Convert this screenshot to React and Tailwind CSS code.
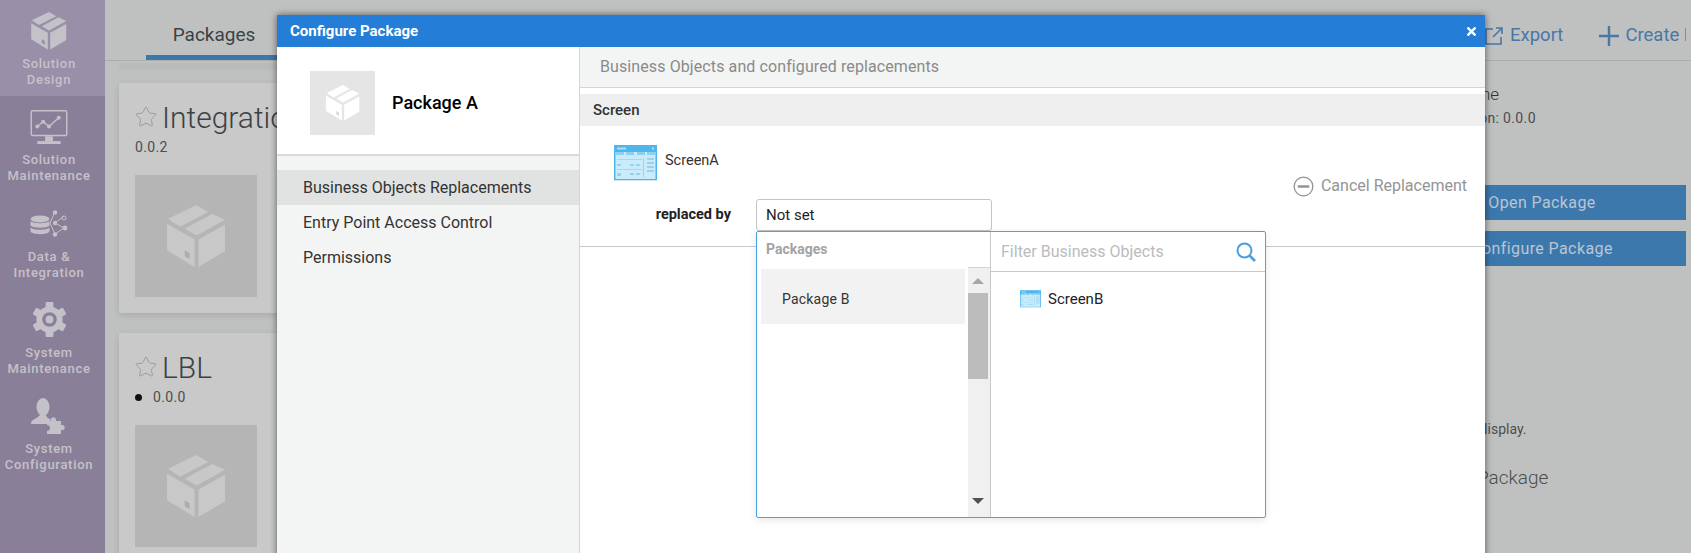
import React from 'react';
import { Star } from 'lucide-react';

const BoxIcon = ({ className, fill, mark }) => (
  <svg viewBox="0 0 60 64" className={className}>
    <polygon points="1,14 30,0 42,7 13,22" fill={fill} />
    <polygon points="18,24 46,9 59,15 30,31" fill={fill} />
    <polygon points="0,19 28,35 28,63 0,46" fill={fill} />
    <polygon points="32,35 59,20 59,47 32,63" fill={fill} />
    <polygon points="18,46 23,49 23,55 18,52" fill={mark} />
  </svg>
);

const MonitorIcon = () => (
  <svg viewBox="0 0 38 36" className="w-[38px] h-[35px]">
    <rect x="0.75" y="0.75" width="36.5" height="25.5" rx="1.5" fill="none" stroke="#c4c2c8" strokeWidth="1.5" />
    <polyline points="7,17 13,12 19,17 29,8" fill="none" stroke="#c4c2c8" strokeWidth="1.5" />
    <circle cx="7" cy="17" r="2" fill="#c4c2c8" />
    <circle cx="13" cy="12" r="2" fill="#c4c2c8" />
    <circle cx="19" cy="17" r="2" fill="#c4c2c8" />
    <circle cx="29" cy="8" r="2" fill="#c4c2c8" />
    <rect x="15" y="27" width="8" height="5" fill="#c4c2c8" />
    <rect x="7" y="32" width="24" height="3" fill="#c4c2c8" />
  </svg>
);

const DataIcon = () => (
  <svg viewBox="0 0 38 27" className="w-[38px] h-[27px]">
    <ellipse cx="10" cy="9" rx="9.5" ry="3.5" fill="#c4c2c8" />
    <path d="M0.5 11c2 3 17 3 19 0v4.5c-2 3-17 3-19 0z" fill="#c4c2c8" />
    <path d="M0.5 17.5c2 3 17 3 19 0v4c-2 3.5-17 3.5-19 0z" fill="#c4c2c8" />
    <path d="M25 2L20 13L25 24L34 18L25 13L34 6" fill="none" stroke="#c4c2c8" strokeWidth="1" />
    <circle cx="25" cy="2.5" r="2.2" fill="#c4c2c8" />
    <circle cx="34" cy="8" r="2" fill="none" stroke="#c4c2c8" />
    <circle cx="25" cy="13" r="2.2" fill="#c4c2c8" />
    <circle cx="35" cy="18" r="2.4" fill="#c4c2c8" />
    <circle cx="25" cy="24.5" r="2.2" fill="#c4c2c8" />
  </svg>
);

const GearIcon = () => (
  <svg viewBox="0 0 34 36" className="w-[33px] h-[35px]">
    {[0, 60, 120, 180, 240, 300].map((a) => (
      <rect key={a} x="13" y="0" width="8" height="8" rx="1" fill="#c4c2c8" transform={`rotate(${a} 17 18)`} />
    ))}
    <circle cx="17" cy="18" r="10.5" fill="none" stroke="#c4c2c8" strokeWidth="6" />
    <circle cx="17" cy="18" r="4" fill="#c4c2c8" />
  </svg>
);

const UserPuzzleIcon = () => (
  <svg viewBox="0 0 36 37" className="w-[36px] h-[37px]">
    <ellipse cx="12" cy="9" rx="6.5" ry="9" fill="#c4c2c8" />
    <path d="M0 26C0 21 6 21 9 17L15 17C16 20 18 21 20 21L17 26Z" fill="#c4c2c8" />
    <path d="M16 23H20C19 18 26 18 25 23H30V27C35 26 35 33 30 32V36H16V33C20 33 20 27 16 27Z" fill="#c4c2c8" />
  </svg>
);

const ScreenIcon = ({ className }) => (
  <svg viewBox="0 0 43 36" className={className}>
    <rect width="43" height="35" fill="#4fb6ec" />
    <rect y="35" width="43" height="1" fill="#cfe6f3" />
    <rect x="1.5" y="7" width="40" height="27" fill="#c9ecfd" />
    <rect x="3" y="2.5" width="9" height="2" fill="#a9dcf5" />
    <rect x="38" y="2.5" width="2" height="2" fill="#a9dcf5" />
    <rect x="2" y="7" width="8" height="3" fill="#8fcff0" />
    <rect x="12" y="7" width="8" height="3" fill="#8fcff0" />
    <rect x="23" y="7" width="8" height="3" fill="#8fcff0" />
    <rect x="33" y="7" width="8" height="3" fill="#8fcff0" />
    <rect x="3" y="14" width="25" height="1" fill="#a6d8f0" />
    <rect x="3" y="19" width="4" height="2" fill="#9ad2ee" />
    <rect x="16" y="19" width="4" height="2" fill="#9ad2ee" />
    <rect x="22" y="19" width="4" height="2" fill="#9ad2ee" />
    <rect x="3" y="24" width="25" height="1" fill="#a6d8f0" />
    <rect x="3" y="28" width="4" height="3" fill="#9ad2ee" />
    <rect x="16" y="28" width="4" height="2" fill="#9ad2ee" />
    <rect x="22" y="28" width="4" height="2" fill="#9ad2ee" />
    <rect x="29" y="13" width="1" height="19" fill="#9ad2ee" />
    <rect x="33" y="13" width="7" height="2" fill="#9ad2ee" />
    <rect x="33" y="17" width="7" height="2" fill="#9ad2ee" />
    <rect x="33" y="21" width="7" height="2" fill="#9ad2ee" />
    <rect x="33" y="25" width="7" height="2" fill="#9ad2ee" />
  </svg>
);

const navItems = [
  { lines: ['Solution', 'Design'], icon: <BoxIcon className="w-[36px] h-[38px]" fill="#c4c2c8" mark="#9a8fa8" />, active: true },
  { lines: ['Solution', 'Maintenance'], icon: <MonitorIcon /> },
  { lines: ['Data &', 'Integration'], icon: <DataIcon /> },
  { lines: ['System', 'Maintenance'], icon: <GearIcon /> },
  { lines: ['System', 'Configuration'], icon: <UserPuzzleIcon /> },
];

const PackageCard = ({ name, version, dot }) => (
  <div className="w-[900px] h-[230px] shrink-0 bg-[#c9c9c9] rounded-[2px] shadow-[0_2px_6px_rgba(0,0,0,0.12)] pl-4 pt-[17px]">
    <div className="flex items-center h-[34px] text-[#3c4145]">
      <Star size={24} strokeWidth={1} className="text-[#9c9c9c] -ml-[1px] mr-[4px]" />
      <span className="text-[30px] font-light">{name}</span>
    </div>
    <div className="flex items-center h-[20px] mt-[3px] text-sm text-[#4d4d4d] tracking-wide">
      {dot && <span className="w-[7px] h-[7px] rounded-full bg-[#111] mr-[11px]" />}
      {version}
    </div>
    <div className="w-[122px] h-[122px] mt-[18px] bg-[#b5b5b5] flex items-center justify-center">
      <BoxIcon className="w-[59px] h-[63px]" fill="#c8c8c8" mark="#adadad" />
    </div>
  </div>
);

export default function App() {
  return (
    <div className="relative flex w-[1691px] h-[553px] overflow-hidden bg-[#bfc1c0]" style={{ fontFamily: 'Roboto, sans-serif' }}>
      {/* Sidebar */}
      <aside className="w-[105px] shrink-0 bg-[#8a7f99]">
        {navItems.map((item) => (
          <div key={item.lines.join()} className={`h-[96.25px] pr-[7px] ${item.active ? 'bg-[#9a8fa8]' : ''}`}>
            <div className="h-[56px] pt-[6px] flex items-center justify-center">{item.icon}</div>
            {item.lines.map((l) => (
              <div key={l} className="text-center text-[13px] leading-4 font-medium tracking-[0.7px] text-[#c4c2c8] whitespace-nowrap">{l}</div>
            ))}
          </div>
        ))}
      </aside>

      {/* Page behind the dialog */}
      <main className="flex-1 min-w-0">
        <div className="h-[61px] flex items-end justify-between border-b border-[#acaeae] pr-[5px]">
          <div className="ml-[41px] w-[131px] h-[60px] border-b-[5px] border-[#3d78ad] flex items-center justify-center pt-[16px] pl-[5px] text-[19px] text-[#3c4145]">
            Packages
          </div>
          <div className="w-[209px] h-[60px] overflow-hidden flex items-center whitespace-nowrap text-[18.5px] text-[#4a76a8] pt-[11px] pl-[8px]">
            <svg viewBox="0 0 18 18" className="w-[18px] h-[18px] mr-[7px] shrink-0" fill="none" stroke="#4a76a8" strokeWidth="1.6">
              <path d="M8 2H1v15h15V10M8 10L17 1M11 1h6v6" />
            </svg>
            <span>Export</span>
            <svg viewBox="0 0 20 20" className="w-[20px] h-[20px] ml-[36px] mr-[6px] shrink-0" stroke="#4a76a8" strokeWidth="2.4">
              <path d="M10 0v20M0 10h20" />
            </svg>
            <span>Create Package</span>
          </div>
        </div>
        <div className="flex">
          <div className="w-[1281px] shrink-0 pl-[14px] flex flex-col overflow-hidden h-[492px]">
            <div className="mt-[2px] h-[7px] shrink-0 bg-[#b9bbba] blur-[1px]" />
            <div className="mt-[13px] flex flex-col gap-5">
              <PackageCard name="Integration" version="0.0.2" />
              <PackageCard name="LBL" version="0.0.0" dot />
            </div>
          </div>
          <div className="w-[300px] shrink-0 text-[#4d4d4d]">
            <div className="mt-[22px] text-[17px] font-light leading-[22px] text-[#333]">Package Name</div>
            <div className="mt-[3px] text-sm leading-5 tracking-wide">Package Version: 0.0.0</div>
            <button className="mt-[57px] ml-3 w-[288px] h-[35px] block bg-[#3d78ad] text-base text-[#b9c6d2] font-normal tracking-wide">Open Package</button>
            <button className="mt-[11px] ml-3 w-[288px] h-[35px] block bg-[#3d78ad] text-base text-[#b9c6d2] font-normal tracking-wide">Configure Package</button>
            <div className="mt-[153px] text-sm leading-5">No package to display.</div>
            <div className="mt-[27px] text-[19px] font-light leading-6 -ml-1">Included in Package</div>
          </div>
        </div>
      </main>

      {/* Dialog */}
      <div className="absolute left-[277px] top-[15px] w-[1208px] h-[560px] flex flex-col bg-white shadow-[0_0_7px_rgba(0,0,0,0.55)]">
        <div className="h-[32px] shrink-0 bg-[#247dd6] flex items-center justify-between pl-[13px] pr-[9px] text-white">
          <span className="text-[15px] font-bold">Configure Package</span>
          <svg viewBox="0 0 9 9" className="w-[9px] h-[9px]" stroke="#ffffff" strokeWidth="2.4">
            <path d="M0.5 0.5L8.5 8.5M8.5 0.5L0.5 8.5" />
          </svg>
        </div>
        <div className="flex flex-1 min-h-0">
          {/* Left column */}
          <div className="w-[303px] shrink-0 border-r border-[#d4d6d5] bg-[#f3f5f4]">
            <div className="h-[109px] bg-white border-b-2 border-[#d9dbda] flex items-center pl-[33px] pt-[4px]">
              <div className="w-[65px] h-[64px] bg-[#e5e5e5] flex items-center justify-center">
                <BoxIcon className="w-[34px] h-[36px]" fill="#ffffff" mark="#d8d8d8" />
              </div>
              <span className="ml-[17px] text-[18px] font-medium text-black">Package A</span>
            </div>
            <div className="pt-[14px] text-base text-[#333]">
              <div className="h-[35px] flex items-center pl-[26px] pt-[1px] bg-[#e1e3e2]">Business Objects Replacements</div>
              <div className="h-[35px] flex items-center pl-[26px] pt-[1px]">Entry Point Access Control</div>
              <div className="h-[35px] flex items-center pl-[26px] pt-[1px]">Permissions</div>
            </div>
          </div>

          {/* Right column */}
          <div className="flex-1 min-w-0">
            <div className="h-[41px] bg-[#f3f5f4] border-b border-[#d4d6d5] flex items-center pl-5 text-base tracking-[0.1px] text-[#8a8a8a]">
              Business Objects and configured replacements
            </div>
            <div className="mt-[6px] h-[32px] bg-[#eeefee] flex items-center pl-[13px] text-[15px] font-medium text-[#333]">Screen</div>
            <div className="relative h-[121px] border-b border-[#c9c9c9] flex justify-between">
              <div className="pl-[34px] pt-[19px]">
                <div className="flex items-center">
                  <ScreenIcon className="w-[43px] h-[36px]" />
                  <span className="ml-[8px] text-[14.5px] text-[#333] pb-[5px]">ScreenA</span>
                </div>
                <div className="flex items-center mt-[18px] -ml-[34px]">
                  <span className="w-[151px] text-right text-[14.5px] font-bold text-[#222]">replaced by</span>
                  <div className="ml-[25px] w-[236px] h-[32px] border border-[#c4c4c4] rounded-[3px] flex items-center pl-[9px] text-[15px] text-[#222] bg-white">Not set</div>
                </div>
              </div>
              <div className="flex items-center pr-[18px] text-base text-[#949494]">
                <svg viewBox="0 0 22 22" className="w-[21px] h-[21px] mr-[7px]" fill="none" stroke="#949494">
                  <circle cx="11" cy="11" r="9.8" strokeWidth="1.4" />
                  <path d="M5 11h12" strokeWidth="2.6" />
                </svg>
                Cancel Replacement
              </div>

              {/* Replacement picker */}
              <div className="absolute left-[176px] top-[105px] w-[510px] h-[287px] z-10 bg-white border border-[#45a5e2] rounded-[2px] shadow-[0_2px_8px_rgba(0,0,0,0.1)] flex">
                <div className="w-[234px] shrink-0 border-r border-[#c9c9c9] flex flex-col">
                  <div className="h-[35px] shrink-0 pl-[9px] pt-[7px] text-sm font-bold text-[#a3a3a3]">Packages</div>
                  <div className="flex flex-1 min-h-0">
                    <div className="flex-1 pl-1 pt-[2px]">
                      <div className="h-[55px] w-[204px] bg-[#f2f2f2] flex items-center pl-[21px] pt-[4px] text-sm text-[#333] tracking-[0.2px]">Package B</div>
                    </div>
                    <div className="w-[22px] shrink-0 bg-[#f0f0f0] border-t border-[#d4d4d4] pr-[2px] flex flex-col items-center">
                      <div className="h-[25px] shrink-0 flex items-center justify-center">
                        <div className="w-0 h-0 border-x-[6px] border-x-transparent border-b-[6px] border-b-[#a8a8a8]" />
                      </div>
                      <div className="w-full h-[86px] shrink-0 bg-[#bcbcbc]" />
                      <div className="flex-1" />
                      <div className="h-[25px] shrink-0 flex items-center justify-center pb-[8px]">
                        <div className="w-0 h-0 border-x-[6px] border-x-transparent border-t-[6px] border-t-[#505050]" />
                      </div>
                    </div>
                  </div>
                </div>
                <div className="flex-1 min-w-0">
                  <div className="h-[40px] border-b border-[#c9c9c9] flex items-center justify-between pl-[10px] pr-[9px]">
                    <input placeholder="Filter Business Objects" className="w-[200px] outline-none text-base placeholder:text-[#bbbbbb]" />
                    <svg viewBox="0 0 20 20" className="w-[20px] h-[20px]" fill="none" stroke="#4a9fe3" strokeWidth="2">
                      <circle cx="8.5" cy="8.5" r="7" />
                      <path d="M13.5 13.5L19 19" strokeWidth="2.6" />
                    </svg>
                  </div>
                  <div className="flex items-center pl-[29px] pt-[16px]">
                    <ScreenIcon className="w-[21px] h-[20px]" />
                    <span className="ml-[7px] text-[15px] text-[#222]">ScreenB</span>
                  </div>
                </div>
              </div>
            </div>
          </div>
        </div>
      </div>
    </div>
  );
}
